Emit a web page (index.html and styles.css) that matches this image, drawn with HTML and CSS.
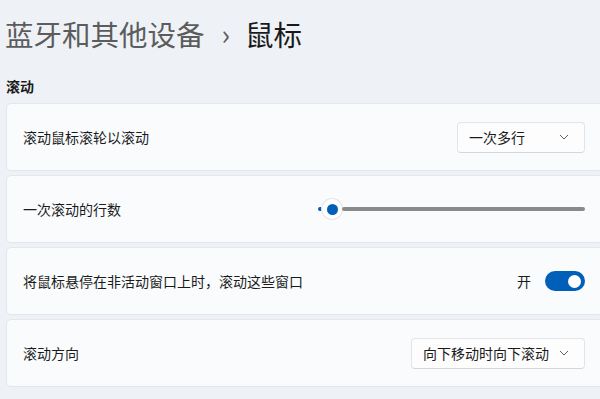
FILE: index.html
```html
<!DOCTYPE html>
<html>
<head>
    <title>鼠标</title>
    <meta charset="UTF-8">
    <link rel="stylesheet" href="styles.css">
</head>
<body>
    <div class="page">
        <h1 class="breadcrumb">
            <span class="crumb-parent">蓝牙和其他设备</span>
            <span class="crumb-sep">›</span>
            <span class="crumb-current">鼠标</span>
        </h1>

        <div class="section-title">滚动</div>

        <div class="card-list">
            <div class="card">
                <span class="card-label">滚动鼠标滚轮以滚动</span>
                <div class="dropdown dropdown-short">
                    <span>一次多行</span>
                    <svg class="chev" width="10" height="6" viewBox="0 0 10 6"><path d="M1 1l4 4 4-4" fill="none" stroke="#5f5f5f" stroke-width="1"/></svg>
                </div>
            </div>

            <div class="card">
                <span class="card-label">一次滚动的行数</span>
                <div class="slider">
                    <div class="slider-fill"></div>
                    <div class="slider-thumb"><div class="slider-dot"></div></div>
                    <div class="slider-track"></div>
                </div>
            </div>

            <div class="card">
                <span class="card-label">将鼠标悬停在非活动窗口上时，滚动这些窗口</span>
                <div class="toggle-wrap">
                    <span class="toggle-text">开</span>
                    <div class="toggle"><div class="toggle-knob"></div></div>
                </div>
            </div>

            <div class="card">
                <span class="card-label">滚动方向</span>
                <div class="dropdown dropdown-long">
                    <span>向下移动时向下滚动</span>
                    <svg class="chev" width="10" height="6" viewBox="0 0 10 6"><path d="M1 1l4 4 4-4" fill="none" stroke="#5f5f5f" stroke-width="1"/></svg>
                </div>
            </div>
        </div>
    </div>
</body>
</html>
```

FILE: styles.css
```css
/* settings page: mouse */
body { margin: 0; background-color: #eef2f7; font-family: "Noto Sans CJK SC", "Noto Sans", sans-serif; color: #1b1b1b; overflow: hidden; width: 600px; height: 399px; }
.page { padding: 14px 0 0 6px; }
.breadcrumb { margin: 0; font-size: 28.5px; font-weight: normal; line-height: 40px; display: flex; align-items: center; }
.crumb-parent { color: #5c5c5c; margin-left: -1px; }
.crumb-sep { color: #5c5c5c; font-size: 28px; margin: -3px 15px 0 17px; }
.crumb-current { color: #1a1a1a; }
.section-title { font-size: 14px; font-weight: 600; margin-top: 22px; line-height: 20px; }
.card-list { display: flex; flex-direction: column; gap: 4px; margin-top: 7px; width: 598px; }
.card { height: 66px; background-color: #f9fbfd; border: 1px solid #e3e7ec; border-radius: 5px; display: flex; align-items: center; justify-content: space-between; padding: 0 18px 0 16px; font-size: 14px; }
.card-label { color: #1b1b1b; }
.dropdown { height: 29px; border: 1px solid #e1e4e8; border-bottom-color: #d4d7db; border-radius: 4px; background-color: #fdfdfd; display: flex; align-items: center; justify-content: space-between; padding: 0 15px 0 11px; font-size: 14px; }
.dropdown-short { width: 100px; }
.dropdown-long { width: 146px; }
.chev { display: block; }
.slider { position: relative; width: 267px; height: 20px; display: flex; align-items: center; }
.slider-track { height: 4px; flex-grow: 1; background-color: #8a8a8a; border-radius: 2px; }
.slider-fill { width: 4px; height: 4px; background-color: #005fb8; border-radius: 2px 0 0 2px; }
.slider-thumb { width: 20px; height: 20px; border-radius: 50%; background-color: #ffffff; box-shadow: 0 0 0 1px #e4e6e9; display: flex; align-items: center; justify-content: center; flex-shrink: 0; }
.slider-dot { width: 11px; height: 11px; border-radius: 50%; background-color: #005fb8; }
.toggle-wrap { display: flex; align-items: center; gap: 14px; }
.toggle-text { font-size: 14px; }
.toggle { width: 40px; height: 20px; border-radius: 10px; background-color: #005fb8; display: flex; align-items: center; justify-content: flex-end; padding-right: 4px; box-sizing: border-box; }
.toggle-knob { width: 13px; height: 13px; border-radius: 50%; background-color: #ffffff; }
```
